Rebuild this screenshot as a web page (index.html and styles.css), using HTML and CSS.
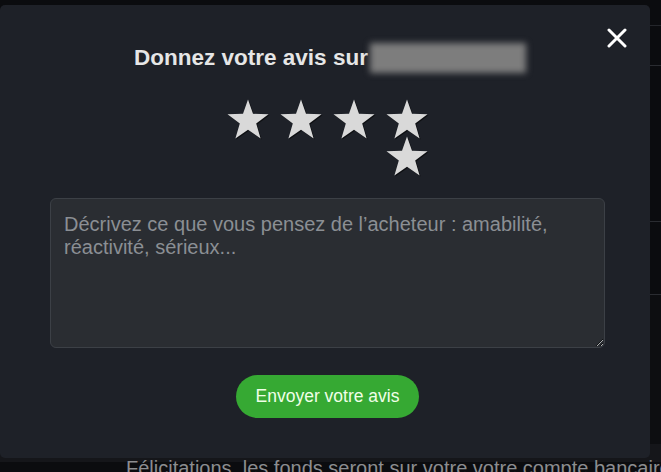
FILE: index.html
```html
<!DOCTYPE html>
<html lang="fr">
<head>
<meta charset="utf-8">
<title>Donnez votre avis</title>
<link rel="stylesheet" href="styles.css">
</head>
<body>
<div class="page">
  <div class="row row-a"></div>
  <div class="row row-b"></div>
  <div class="row row-c"></div>
  <div class="row row-d"></div>
  <div class="row row-e"></div>
  <div class="strip"></div>
  <p class="notice">Félicitations, les fonds seront sur votre votre compte bancaire</p>
</div>

<div class="modal">
  <button class="close" aria-label="Fermer">
    <svg width="20" height="20" viewBox="0 0 20 20"><path d="M2 2 L18 18 M18 2 L2 18" stroke="#fff" stroke-width="3" stroke-linecap="round" fill="none"/></svg>
  </button>
  <div class="content">
    <h2 class="title">Donnez votre avis sur<span class="blurred"></span></h2>
    <div class="stars">
      <span class="star"><svg viewBox="0 0 42 40"><path d="M21 0.5 L26 14.8 L41.5 15.2 L29.2 24.6 L33.6 39.5 L21 30.7 L8.4 39.5 L12.8 24.6 L0.5 15.2 L16 14.8 Z"/></svg></span>
      <span class="star"><svg viewBox="0 0 42 40"><path d="M21 0.5 L26 14.8 L41.5 15.2 L29.2 24.6 L33.6 39.5 L21 30.7 L8.4 39.5 L12.8 24.6 L0.5 15.2 L16 14.8 Z"/></svg></span>
      <span class="star"><svg viewBox="0 0 42 40"><path d="M21 0.5 L26 14.8 L41.5 15.2 L29.2 24.6 L33.6 39.5 L21 30.7 L8.4 39.5 L12.8 24.6 L0.5 15.2 L16 14.8 Z"/></svg></span>
      <span class="star"><svg viewBox="0 0 42 40"><path d="M21 0.5 L26 14.8 L41.5 15.2 L29.2 24.6 L33.6 39.5 L21 30.7 L8.4 39.5 L12.8 24.6 L0.5 15.2 L16 14.8 Z"/></svg></span>
      <span class="star star-last"><svg viewBox="0 0 42 40"><path d="M21 0.5 L26 14.8 L41.5 15.2 L29.2 24.6 L33.6 39.5 L21 30.7 L8.4 39.5 L12.8 24.6 L0.5 15.2 L16 14.8 Z"/></svg></span>
    </div>
    <textarea class="review" placeholder="Décrivez ce que vous pensez de l’acheteur : amabilité, réactivité, sérieux..."></textarea>
    <button class="submit">Envoyer votre avis</button>
  </div>
</div>
</body>
</html>
```

FILE: styles.css
```css
html, body {
  margin: 0;
  padding: 0;
}
body {
  width: 661px;
  height: 472px;
  overflow: hidden;
  background: #0b0c0f;
  font-family: "Liberation Sans", Arial, sans-serif;
  position: relative;
}

.page {
  display: flex;
  flex-direction: column;
}
.row {
  border-bottom: 1px solid #2a2c31;
}
.row-a { height: 25px; border-bottom-color: #24262b; }
.row-b { height: 39px; }
.row-c { height: 155px; }
.row-d { height: 72px; }
.row-e { height: 149px; border-bottom: none; background: #0d0e11; }
.strip {
  height: 18px;
  background: #15161a;
}
.notice {
  margin: -5px 0 0 126px;
  font-size: 20px;
  color: #8c8d90;
  white-space: nowrap;
  line-height: 22px;
}

.modal {
  position: absolute;
  left: 0;
  top: 5px;
  width: 650px;
  height: 453px;
  background: #1e2128;
  border-radius: 5px;
  box-sizing: border-box;
}

.close {
  position: absolute;
  top: 23px;
  right: 23px;
  width: 20px;
  height: 20px;
  padding: 0;
  border: none;
  background: none;
  display: flex;
}

.content {
  display: flex;
  flex-direction: column;
  align-items: center;
  padding: 36px 45px 0 50px;
}

.title {
  margin: 0;
  font-size: 22.5px;
  font-weight: bold;
  color: #e6e6e6;
  line-height: 34px;
  display: flex;
  align-items: center;
  padding-left: 5px;
}
.blurred {
  display: inline-block;
  width: 156px;
  height: 30px;
  margin-left: 2px;
  background: #7d7d7d;
  filter: blur(3px);
}

.stars {
  width: 212px;
  display: flex;
  flex-wrap: wrap;
  margin-top: 24px;
}
.star {
  width: 53px;
  height: 36.5px;
  display: flex;
  justify-content: center;
}
.star svg {
  width: 42px;
  height: 40px;
  fill: #d9d9d9;
  filter: drop-shadow(1px 1px 0 rgba(0,0,0,0.55));
}
.star-last {
  margin-left: 159px;
}

.review {
  margin-top: 26px;
  width: 555px;
  height: 150px;
  box-sizing: border-box;
  padding: 14px 13px;
  background: #2a2d32;
  border: 1px solid #3c4046;
  border-radius: 6px;
  color: #d0d0d0;
  font-family: "Liberation Sans", Arial, sans-serif;
  font-size: 20px;
  line-height: 23px;
  color-scheme: dark;
  outline: none;
}
.review::placeholder {
  color: #8b8f94;
}

.submit {
  margin-top: 27px;
  height: 43px;
  padding: 0 20px;
  border: none;
  border-radius: 22px;
  background: #36a933;
  color: #f0ffe8;
  font-family: "Liberation Sans", Arial, sans-serif;
  font-size: 17.5px;
  line-height: 43px;
}
```
